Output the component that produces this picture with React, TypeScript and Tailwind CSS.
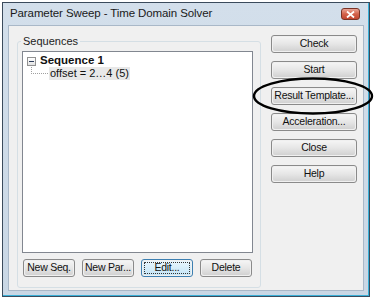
import React from "react";

const font = { fontFamily: '"Liberation Sans", Arial, sans-serif' };

function Btn({ label, w, focused }: { label: string; w?: string; focused?: boolean }) {
  return (
    <div
      className={`${w ?? "w-full"} h-[18px] rounded-[3px] border ${
        focused ? "border-[#3c7fb1]" : "border-[#8a8a8a]"
      } p-[1px]`}
    >
      <div
        className={`h-full w-full rounded-[2px] flex items-center justify-center whitespace-nowrap text-[10.5px] tracking-[-0.25px] text-[#111] ${
          focused
            ? "bg-gradient-to-b from-[#eaf6fd] to-[#c4e5f6] outline-1 outline-dotted outline-[#333] -outline-offset-2"
            : "bg-gradient-to-b from-[#f4f4f4] via-[#e6e6e6] to-[#d2d2d2]"
        }`}
      >
        {label}
      </div>
    </div>
  );
}

export default function App() {
  return (
    <div className="w-[374px] h-[301px] bg-white pl-[2px] pt-[2px] relative" style={font}>
      <div className="w-[368px] h-[295px] border border-[#3b4b5c] shadow-[inset_-1px_-1px_0_#3ab0d8] bg-gradient-to-b from-[#d3dfeb] to-[#c9d7e5] flex flex-col">
        {/* title bar */}
        <div className="h-[22px] flex items-center pl-[7px] pr-[9px] shrink-0">
          <span className="text-[11.5px] text-[#1a1a1a] tracking-[-0.1px]">Parameter Sweep - Time Domain Solver</span>
          <div className="ml-auto self-start mt-[5px] w-[19px] h-[12px] rounded-[3px] border border-[#7a3326] bg-gradient-to-b from-[#e9a597] via-[#d3614a] to-[#c24530] flex items-center justify-center">
            <svg width="9" height="7" viewBox="0 0 9 7">
              <path d="M1 0.5 L8 6.5 M8 0.5 L1 6.5" stroke="#fff" strokeWidth="1.8" />
            </svg>
          </div>
        </div>
        {/* body */}
        <div className="mx-[5px] mb-[5px] flex-1 bg-[#f0f0f0] border border-[#a9b8c8] flex pt-[9px] pl-[8px] pr-[6px]">
          {/* group box */}
          <div className="relative mt-[6px] w-[244px] h-[247px] border border-[#d5dfe5] rounded-[3px] pl-[4px] pt-[9px]">
            <span className="absolute -top-[7px] left-[3px] px-[2px] bg-[#f0f0f0] text-[11px] leading-[12px] text-[#222]">
              Sequences
            </span>
            <div className="w-[231px] h-[202px] bg-white border border-[#828790] pt-[3px] pl-[4px] text-[11px] text-[#111]">
              <div className="flex items-center h-[12px]">
                <div className="w-[9px] h-[9px] border border-[#919191] bg-gradient-to-b from-white to-[#e2e2e2] flex items-center justify-center">
                  <div className="w-[5px] h-[1px] bg-[#2c3d5a]" />
                </div>
                <span className="ml-[4px] font-bold text-[11.5px]">Sequence 1</span>
              </div>
              <div className="flex items-start h-[13px]">
                <div className="ml-[4px] w-[17px] h-[7px] border-l border-b border-dotted border-[#a0a0a0]" />
                <span className="ml-[1px] px-[1px] leading-[13px] bg-[#e8e8e8]">offset = 2…4 (5)</span>
              </div>
            </div>
            <div className="flex gap-[7px] mt-[6px] pl-[1px]">
              <Btn label="New Seq." w="w-[52px]" />
              <Btn label="New Par..." w="w-[52px]" />
              <Btn label="Edit..." w="w-[52px]" focused />
              <Btn label="Delete" w="w-[52px]" />
            </div>
          </div>
          {/* right buttons */}
          <div className="ml-auto w-[86px] flex flex-col gap-[8px]">
            <Btn label="Check" />
            <Btn label="Start" />
            <Btn label="Result Template..." />
            <Btn label="Acceleration..." />
            <Btn label="Close" />
            <Btn label="Help" />
          </div>
        </div>
      </div>
      {/* annotation ellipse */}
      <svg className="absolute left-[252px] top-[76px]" width="122" height="40" viewBox="0 0 122 40">
        <ellipse cx="61" cy="20" rx="59" ry="17.5" fill="none" stroke="#000" strokeWidth="2.4" />
      </svg>
    </div>
  );
}
